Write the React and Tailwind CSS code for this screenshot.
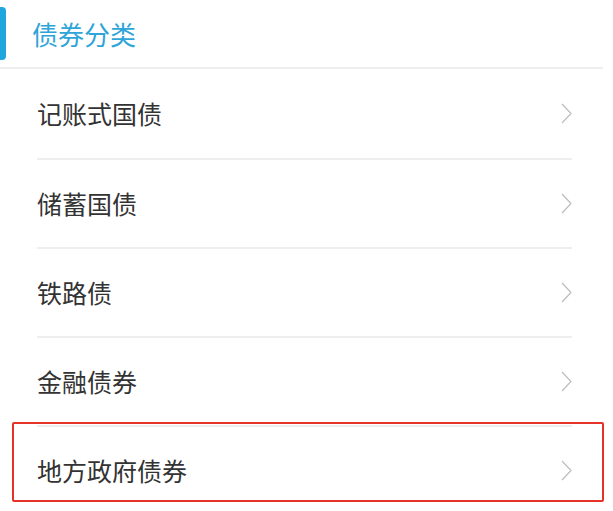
const items = ["记账式国债", "储蓄国债", "铁路债", "金融债券", "地方政府债券"];

const Chevron = () => (
  <svg width="11" height="21" viewBox="0 0 11 21" fill="none">
    <polyline
      points="1,1 10,10.5 1,20"
      stroke="#bdbdbd"
      strokeWidth="1.2"
      strokeLinejoin="round"
    />
  </svg>
);

export default function App() {
  return (
    <div className="relative w-[613px] h-[511px] overflow-hidden bg-white font-['Noto_Sans_CJK_SC','Noto_Sans',sans-serif]">
      <div className="flex items-center h-[69px] w-[603px] border-b-2 border-[#eeeeee]">
        <div className="w-[6px] h-[53px] rounded-r-[4px] bg-[#1ea6dd]" />
        <span className="ml-[26px] text-[26px] leading-none text-[#2ea5d8]">
          债券分类
        </span>
      </div>
      <div className="ml-[37px] mr-[41px]">
        {items.map((name, i) => (
          <div
            key={name}
            className={`flex items-center justify-between h-[89px] ${
              i > 0 ? "border-t-2 border-[#eeeeee]" : ""
            }`}
          >
            <span className="text-[25px] leading-none text-[#333333]">
              {name}
            </span>
            <Chevron />
          </div>
        ))}
      </div>
      <div className="absolute left-[12px] top-[422px] w-[592px] h-[80px] border-2 border-[#e5332a] rounded-[2px]" />
    </div>
  );
}
